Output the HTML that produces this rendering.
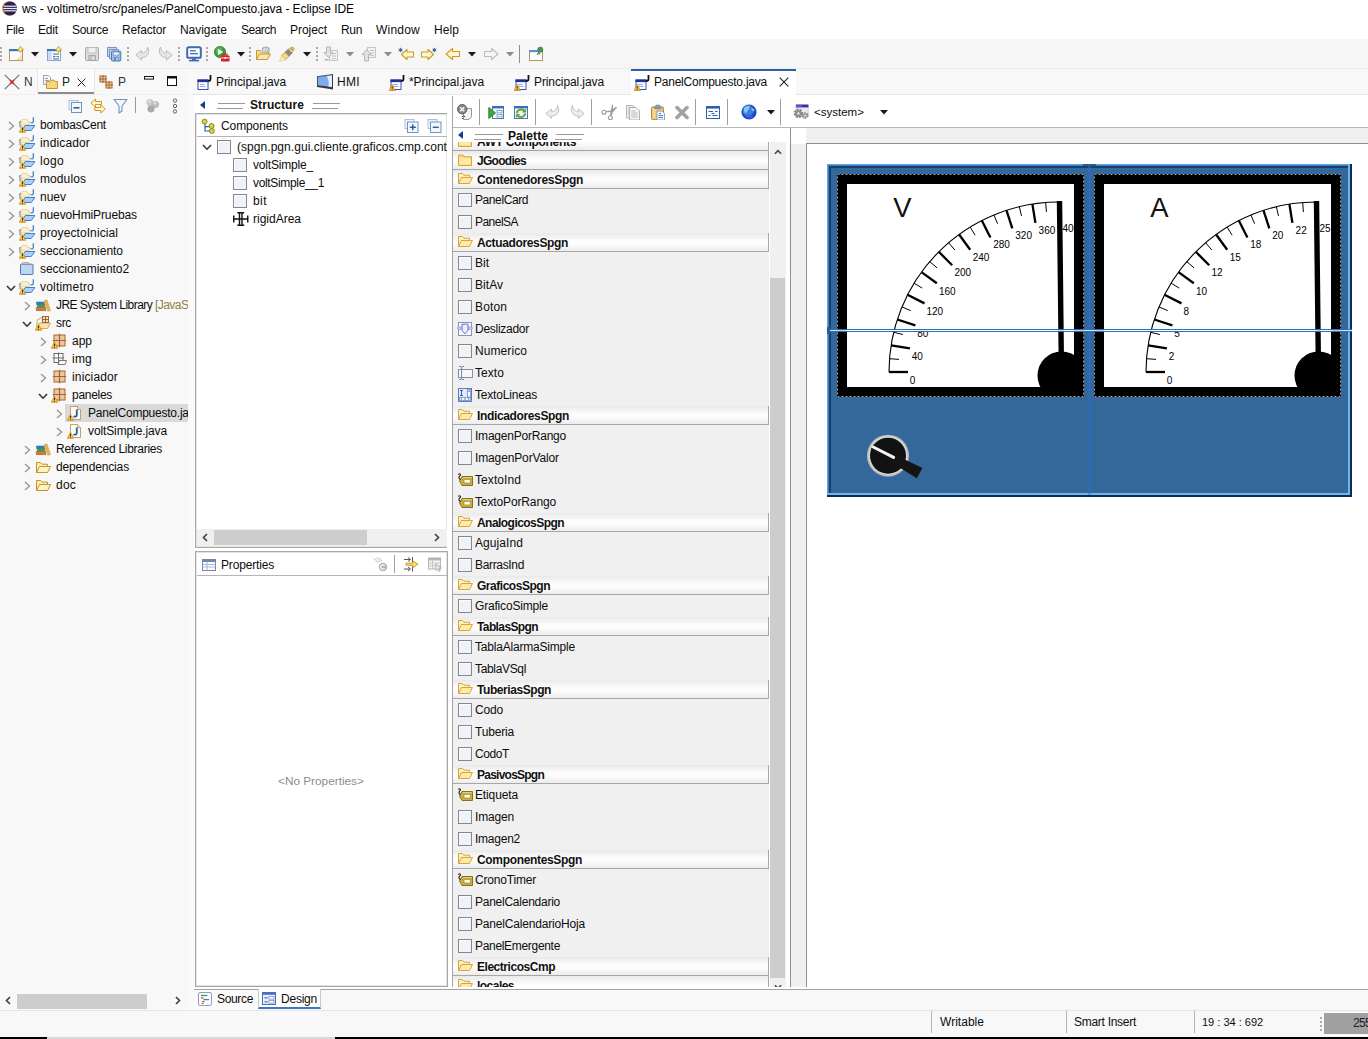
<!DOCTYPE html>
    <html><head><meta charset="utf-8"><title>ws - voltimetro/src/paneles/PanelCompuesto.java - Eclipse IDE</title>
    <style>
    html,body{margin:0;padding:0}
    body{width:1368px;height:1039px;overflow:hidden;position:relative;background:#f7f7f7;font-family:"Liberation Sans",sans-serif;font-size:12px;color:#0d0d0d}
    .t{position:absolute;white-space:pre;line-height:16px;height:16px}
    .i{position:absolute;overflow:visible}
    .b{position:absolute;box-sizing:border-box}
    .bold{font-weight:bold}
    .grey{color:#8a8a8a}
    .cat{position:absolute;left:453px;width:316px;height:19px;box-sizing:border-box;border-right:1px solid #a6a6a6;border-bottom:1px solid #a6a6a6;background:linear-gradient(#e9e9e9,#fdfdfd 45%,#fdfdfd 60%,#ececec)}
    .cat .t{left:24px;top:2px;font-weight:bold;color:#111}
    .cat .i{left:3px;top:1px}
    .pe{position:absolute;left:453px;width:316px;height:22px}
    .pe .t{left:22px;top:3px}
    .pe .i{left:4px;top:3px}
    .tr{position:absolute;left:0;height:18px;width:188px}
    </style></head><body>
    
<svg width="0" height="0" style="position:absolute"><defs><symbol id="eclipse" viewBox="0 0 15 15"><circle cx="7.3" cy="7.5" r="7.3" fill="#f09a3a"/><circle cx="8" cy="7.5" r="7" fill="#2c2255"/><rect x="1.6" y="4.6" width="13" height="1.2" fill="#ece8f4"/><rect x="1.1" y="6.9" width="14" height="1.2" fill="#ece8f4"/><rect x="1.6" y="9.2" width="13" height="1.2" fill="#ece8f4"/></symbol><symbol id="dd" viewBox="0 0 8 5"><path d="M0 0 H8 L4 4.5 Z" fill="#1a1a1a"/></symbol><symbol id="ddg" viewBox="0 0 8 5"><path d="M0 0 H8 L4 4.5 Z" fill="#8c8c8c"/></symbol><symbol id="tb_new" viewBox="0 0 16 16"><rect x="1.5" y="3.5" width="13" height="11" fill="#fdfdfd" stroke="#b59a5a"/><rect x="1" y="3" width="14" height="2.2" fill="#3f74b8"/><path d="M8 14 L14 8 V14Z" fill="#f3e3b8"/><path d="M12.5 0.3 L13.6 2.4 L15.7 3.5 L13.6 4.6 L12.5 6.7 L11.4 4.6 L9.3 3.5 L11.4 2.4 Z" fill="#fce98a" stroke="#c99a1a" stroke-width=".8" stroke-linejoin="round"/></symbol><symbol id="tb_newj" viewBox="0 0 16 16"><rect x="1.5" y="3.5" width="13" height="11" fill="#fdfdfd" stroke="#8aa4c8"/><rect x="1" y="3" width="14" height="2.2" fill="#3f74b8"/><rect x="2" y="5.2" width="3.6" height="9" fill="#c9dcf2"/><rect x="7" y="7.5" width="6" height="1.2" fill="#5c7fb0"/><rect x="7" y="10" width="2.5" height="1.2" fill="#5c7fb0"/><rect x="10.5" y="10" width="2.5" height="1.2" fill="#5c7fb0"/><rect x="7" y="12.3" width="6" height="1.2" fill="#5c7fb0"/><path d="M12.5 0.3 L13.6 2.4 L15.7 3.5 L13.6 4.6 L12.5 6.7 L11.4 4.6 L9.3 3.5 L11.4 2.4 Z" fill="#fce98a" stroke="#c99a1a" stroke-width=".8" stroke-linejoin="round"/></symbol><symbol id="tb_save" viewBox="0 0 16 16"><path d="M1.5 2.5 a1 1 0 0 1 1-1 H13.5 a1 1 0 0 1 1 1 V13.5 a1 1 0 0 1 -1 1 H2.5 a1 1 0 0 1 -1-1Z" fill="#dcdcdc" stroke="#a8a8a8"/><rect x="4" y="1.5" width="8" height="5.5" fill="#efefef" stroke="#b8b8b8" stroke-width=".8"/><rect x="5" y="9.5" width="6.5" height="5" fill="#c4c4c4" stroke="#a0a0a0" stroke-width=".8"/><rect x="8.5" y="10.8" width="1.6" height="2.8" fill="#efefef"/></symbol><symbol id="tb_saveall" viewBox="0 0 16 16"><path d="M1.5 1.5 H10.5 V10.5 H1.5Z" fill="#c5d8ee" stroke="#6f93c4"/><path d="M3.5 3.5 H12.5 V12.5 H3.5Z" fill="#c5d8ee" stroke="#6f93c4"/><path d="M5.5 6 a.8 .8 0 0 1 .8-.8 H14 a.8 .8 0 0 1 .8 .8 V14.2 a.8 .8 0 0 1 -.8 .8 H6.3 a.8 .8 0 0 1 -.8-.8Z" fill="#9fbde4" stroke="#4f7ab8"/><rect x="7.3" y="6" width="5.6" height="3.2" fill="#e8f0fa" stroke="#6f93c4" stroke-width=".6"/><rect x="8" y="11.2" width="4.6" height="3.6" fill="#5f88c4"/><rect x="10.3" y="12" width="1.3" height="2.2" fill="#e8f0fa"/></symbol><symbol id="tb_undo" viewBox="0 0 16 16"><path d="M0.8 9 L6.5 4.5 V7 C9.5 7 12 5 12.5 1 C15.5 6 12.5 11.8 6.5 11.5 V14 Z" fill="#e6e6e6" stroke="#b4b4b4" stroke-width=".9" stroke-linejoin="round"/></symbol><symbol id="tb_redo" viewBox="0 0 16 16"><path d="M15.2 9 L9.5 4.5 V7 C6.5 7 4 5 3.5 1 C0.5 6 3.5 11.8 9.5 11.5 V14 Z" fill="#e6e6e6" stroke="#b4b4b4" stroke-width=".9" stroke-linejoin="round"/></symbol><symbol id="tb_console" viewBox="0 0 16 16"><rect x="1.2" y="1.2" width="13.6" height="10.6" rx="1.6" fill="#fff" stroke="#3d6ab0" stroke-width="2"/><rect x="4" y="4.2" width="6" height="1.3" fill="#3d6ab0"/><rect x="4" y="7" width="8" height="1.3" fill="#3d6ab0"/><rect x="6" y="12.5" width="4" height="1.5" fill="#3d6ab0"/><rect x="3" y="13.8" width="10" height="1.6" fill="#3d6ab0"/></symbol><symbol id="tb_run" viewBox="0 0 16 16"><circle cx="6" cy="6" r="5.6" fill="#3f9b3f" stroke="#2a7a2a" stroke-width=".8"/><circle cx="5" cy="4.6" r="3.4" fill="#6fc26f" opacity=".6"/><path d="M4 3 L9.2 6 L4 9Z" fill="#fff"/><rect x="7" y="9.5" width="8.6" height="6" rx="1" fill="#d8202a"/><rect x="9.6" y="8" width="3.4" height="2" fill="none" stroke="#d8202a" stroke-width="1.1"/><rect x="7" y="11.4" width="8.6" height="1" fill="#fff" opacity=".85"/><rect x="10.3" y="11" width="2" height="1.8" fill="#fff"/></symbol><symbol id="tb_open" viewBox="0 0 16 16"><path d="M7.5 4.5 V1.8 H9 L9.6 1 H12.4 L13 1.8 H14 V6" fill="#c9d6ec" stroke="#7f96bc" stroke-width=".8"/><path d="M1.5 13.5 V4.5 H5.5 L6.8 6 H13.5 V8" fill="#f6dc9c" stroke="#c08c2c" stroke-width=".9" stroke-linejoin="round"/><path d="M1.5 13.5 L4.5 8 H15.5 L12.5 13.5Z" fill="#f9e5ae" stroke="#c08c2c" stroke-width=".9" stroke-linejoin="round"/></symbol><symbol id="tb_pen" viewBox="0 0 16 16"><path d="M9 3.5 L13.5 0.8 L15.3 2.6 L12.8 7.2 Z" fill="#f6d88a" stroke="#c08c2c" stroke-width=".8" stroke-linejoin="round"/><circle cx="12.8" cy="3.3" r=".8" fill="#555"/><path d="M6 6.2 L9 3.5 L12.8 7.2 L10 10.2Z" fill="#8a8a8a" stroke="#666" stroke-width=".6"/><path d="M2.5 10 L6 6.2 L10 10.2 L6.4 13.8Z" fill="#f6d88a" stroke="#c08c2c" stroke-width=".8"/><path d="M0.5 15.5 L2.5 10 L6.4 13.8Z" fill="#fdf3c8" stroke="#e4c060" stroke-width=".6"/></symbol><symbol id="tb_next" viewBox="0 0 16 16"><rect x="6.5" y="4.5" width="8" height="10" fill="#f2f2f2" stroke="#c4c4c4"/><rect x="9" y="7" width="4" height="1" fill="#c4c4c4"/><rect x="9" y="9.5" width="4" height="1" fill="#c4c4c4"/><rect x="9" y="12" width="4" height="1" fill="#c4c4c4"/><path d="M3.5 1 H7.5 V6.5 H10 L5.5 11.5 L1 6.5 H3.5Z" fill="#e2e2e2" stroke="#b0b0b0" stroke-width=".9" stroke-linejoin="round"/><rect x="1.5" y="13" width="4" height="1.4" fill="#b0b0b0"/></symbol><symbol id="tb_prev" viewBox="0 0 16 16"><rect x="6.5" y="1.5" width="8" height="10" fill="#f2f2f2" stroke="#c4c4c4"/><rect x="9" y="4" width="4" height="1" fill="#c4c4c4"/><rect x="9" y="6.5" width="4" height="1" fill="#c4c4c4"/><rect x="9" y="9" width="4" height="1" fill="#c4c4c4"/><path d="M3.5 15 H7.5 V8.5 H10 L5.5 3.5 L1 8.5 H3.5Z" fill="#e2e2e2" stroke="#b0b0b0" stroke-width=".9" stroke-linejoin="round"/></symbol><symbol id="tb_lastedit" viewBox="0 0 16 16"><path d="M3.5 8.5 L9 3.5 V6 H15.5 V11 H9 V13.5Z" fill="#fff7d4" stroke="#d09a1e" stroke-width="1.1" stroke-linejoin="round"/><g transform="translate(2.6 4)"><path d="M0 -2.2V2.2M-1.9 -1.1L1.9 1.1M-1.9 1.1L1.9 -1.1" stroke="#2f5f9a" stroke-width="1" fill="none"/></g></symbol><symbol id="tb_nextedit" viewBox="0 0 16 16"><path d="M12.5 8.5 L7 3.5 V6 H0.5 V11 H7 V13.5Z" fill="#fff7d4" stroke="#d09a1e" stroke-width="1.1" stroke-linejoin="round"/><g transform="translate(13.4 4)"><path d="M0 -2.2V2.2M-1.9 -1.1L1.9 1.1M-1.9 1.1L1.9 -1.1" stroke="#2f5f9a" stroke-width="1" fill="none"/></g></symbol><symbol id="tb_back" viewBox="0 0 16 16"><path d="M1 8 L7.5 2.5 V5.5 H14.5 V10.5 H7.5 V13.5Z" fill="#fff7d4" stroke="#d09a1e" stroke-width="1.1" stroke-linejoin="round"/></symbol><symbol id="tb_fwd" viewBox="0 0 16 16"><path d="M15 8 L8.5 2.5 V5.5 H1.5 V10.5 H8.5 V13.5Z" fill="#f4f4f4" stroke="#bdbdbd" stroke-width="1.1" stroke-linejoin="round"/></symbol><symbol id="tb_pin" viewBox="0 0 16 16"><rect x="1.5" y="4.5" width="13" height="10" fill="#fbfdff" stroke="#b59a5a"/><rect x="1" y="4" width="14" height="2.2" fill="#5f8fcc"/><path d="M9 9 L11 6.5" stroke="#555" stroke-width="1"/><circle cx="12.3" cy="3.6" r="2.6" fill="#3f9b4f" stroke="#2a7a3a" stroke-width=".6"/><path d="M10 6.8 L12 8" stroke="#2a7a3a" stroke-width="1.4"/></symbol><symbol id="x_red" viewBox="0 0 16 16"><path d="M0.8 0.8 L15.2 15.2 M15.2 0.8 L0.8 15.2" stroke="#6e6e6e" stroke-width="1.2"/><path d="M6 6 L10 10 M10 6 L6 10" stroke="#d42020" stroke-width="1.5"/></symbol><symbol id="x_close" viewBox="0 0 10 10"><path d="M0.7 0.7 L9.3 9.3 M9.3 0.7 L0.7 9.3" stroke="#222" stroke-width="1.1"/></symbol><symbol id="pkgexp" viewBox="0 0 16 16"><path d="M1.5 1.5 H6.5 L8.5 3.5 V10.5 H1.5Z" fill="#f4f7fb" stroke="#8a99ad" stroke-width=".9"/><rect x="3" y="4" width="3" height=".9" fill="#7c9cc8"/><rect x="3" y="6" width="4" height=".9" fill="#7c9cc8"/><path d="M4.5 14.5 V7.5 H8 L9 6.2 H12.5 L13.3 7.5 H15.5 V14.5Z" fill="#f7d67a" stroke="#c08c2c" stroke-width=".9" stroke-linejoin="round"/></symbol><symbol id="hier" viewBox="0 0 16 16"><rect x="2" y="2" width="6" height="6" fill="#e9c9a4" stroke="#a8642c" stroke-width="1"/><path d="M5.0 1 V9 M1 5.0 H9" stroke="#a8642c" stroke-width="1"/><rect x="8" y="8" width="6" height="6" fill="#e9c9a4" stroke="#a8642c" stroke-width="1"/><path d="M11.0 7 V15 M7 11.0 H15" stroke="#a8642c" stroke-width="1"/></symbol><symbol id="minim" viewBox="0 0 10 4"><rect x="0.5" y="0.5" width="9" height="2.6" fill="#fff" stroke="#111" stroke-width="1"/></symbol><symbol id="maxim" viewBox="0 0 10 10"><rect x="0.5" y="0.5" width="9" height="9" fill="#fff" stroke="#111" stroke-width="1"/><rect x="0.5" y="0.5" width="9" height="2" fill="#111"/></symbol><symbol id="collapse" viewBox="0 0 16 16"><rect x="1" y="2.5" width="9" height="9" fill="#eef4fb" stroke="#a9c1de"/><rect x="3.5" y="4.5" width="10" height="10" fill="#f4f8fd" stroke="#6f93c4"/><rect x="5.5" y="9" width="6" height="1.6" fill="#2f5f9a"/></symbol><symbol id="link" viewBox="0 0 16 16"><path d="M1 5 L5.5 1 V3.5 H11.5 V6.5 H5.5 V9Z" fill="#fff7d4" stroke="#d09a1e" stroke-linejoin="round"/><path d="M15.3 11 L10.8 7 V9.5 H4.8 V12.5 H10.8 V15Z" fill="#fff7d4" stroke="#d09a1e" stroke-linejoin="round"/></symbol><symbol id="filter" viewBox="0 0 16 16"><path d="M1 1.5 H14 L9 8 V13 L6 15 V8Z" fill="#f1f6fc" stroke="#6f93c4" stroke-width="1.1" stroke-linejoin="round"/></symbol><symbol id="focus" viewBox="0 0 16 16"><circle cx="5" cy="4.5" r="3.6" fill="#c9c9c9"/><circle cx="10.5" cy="6.5" r="3.6" fill="#bdbdbd"/><circle cx="6" cy="10.8" r="3.6" fill="#a9a9a9"/><circle cx="4.4" cy="3.6" r="1.4" fill="#e2e2e2"/><circle cx="10" cy="5.4" r="1.4" fill="#dcdcdc"/></symbol><symbol id="kebab" viewBox="0 0 8 16"><circle cx="4" cy="2.6" r="1.7" fill="none" stroke="#555" stroke-width=".9"/><circle cx="4" cy="8" r="1.7" fill="none" stroke="#555" stroke-width=".9"/><circle cx="4" cy="13.4" r="1.7" fill="none" stroke="#555" stroke-width=".9"/></symbol><symbol id="arr_c" viewBox="0 0 7 10"><path d="M1 1 L5.5 5 L1 9" fill="none" stroke="#9a9a9a" stroke-width="1.5"/></symbol><symbol id="arr_o" viewBox="0 0 10 7"><path d="M1 1 L5 5.2 L9 1" fill="none" stroke="#333" stroke-width="1.6"/></symbol><symbol id="proj" viewBox="0 0 16 16"><path d="M1.2 10.5 L0.8 4.6 H2.2" fill="none" stroke="#5a5a5a" stroke-width=".9"/><path d="M2 9 V4.5 L3.2 2.4 H8.2 L9.2 4.5 H10.5 V7.5 H3.5Z" fill="#fbeec4" stroke="#e0c884" stroke-width=".7" stroke-linejoin="round"/><path d="M6.2 8.5 H16 L12.2 13.5 H2.8Z" fill="#a9d0f7" stroke="#3f7fd0" stroke-width="1" stroke-linejoin="round"/><path d="M14.3 0.3 V4.6 C14.3 6.2 12.6 6.4 11.6 5.4" fill="none" stroke="#3a70c0" stroke-width="1.2"/><path d="M3.5 9.2 L0.3 15.3 H6.7 Z" fill="#f5c24a" stroke="#c98a1c" stroke-width=".8" stroke-linejoin="round"/><rect x="3" y="11" width="1" height="2.2" fill="#4a3200"/><rect x="3" y="13.8" width="1" height="1" fill="#4a3200"/></symbol><symbol id="projclosed" viewBox="0 0 16 16"><path d="M2.5 3.2 L3.7 1.5 H9.5 L10.5 3.2" fill="#f3e7c4" stroke="#c9a050" stroke-width=".8"/><rect x="1.5" y="3.2" width="12.5" height="10.3" rx=".8" fill="#bcd6f2" stroke="#4a7ab8" stroke-width="1"/></symbol><symbol id="jre" viewBox="0 0 16 16"><rect x="1.6" y="5" width="7.6" height="2.6" fill="#2f7fb4" stroke="#2a6a9a" stroke-width=".5"/><rect x="2.3" y="7.6" width="7.6" height="2.6" fill="#3f9a6c" stroke="#2f7f55" stroke-width=".5"/><rect x="1.2" y="10.2" width="9.6" height="3.6" fill="#c87a3c" stroke="#a85f28" stroke-width=".5"/><path d="M9.3 3.6 L11.8 2.8 L15.4 13.4 L12.8 14.2Z" fill="#eeb04a" stroke="#d09430" stroke-width=".6" stroke-linejoin="round"/></symbol><symbol id="srcf" viewBox="0 0 16 16"><path d="M1.5 11.5 L2.5 4.5 H4 L5 3 H7.5" fill="none" stroke="#c9a050" stroke-width=".9"/><path d="M4.5 8 H15.5 L12.5 13.5 H1.5Z" fill="#f9e3a8" stroke="#c9a050" stroke-width=".9" stroke-linejoin="round"/><rect x="7.5" y="1.5" width="6" height="6" fill="#f3dcc0" stroke="#9a5a2a" stroke-width=".9"/><path d="M10.5 1 V8 M7 4.5 H14" stroke="#9a5a2a" stroke-width=".9"/><path d="M3.5 9.2 L0.3 15.3 H6.7 Z" fill="#f5c24a" stroke="#c98a1c" stroke-width=".8" stroke-linejoin="round"/><rect x="3" y="11" width="1" height="2.2" fill="#4a3200"/><rect x="3" y="13.8" width="1" height="1" fill="#4a3200"/></symbol><symbol id="pkg" viewBox="0 0 16 16"><rect x="3" y="2" width="11" height="11" fill="#e9c9a4" stroke="#a8642c" stroke-width="1"/><path d="M8.5 0.8 V14.2 M1.8 7.5 H15.2" stroke="#a8642c" stroke-width="1.2"/></symbol><symbol id="pkgw" viewBox="0 0 16 16"><rect x="3" y="2" width="11" height="11" fill="#e9c9a4" stroke="#a8642c" stroke-width="1"/><path d="M8.5 0.8 V14.2 M1.8 7.5 H15.2" stroke="#a8642c" stroke-width="1.2"/><path d="M3.5 9.2 L0.3 15.3 H6.7 Z" fill="#f5c24a" stroke="#c98a1c" stroke-width=".8" stroke-linejoin="round"/><rect x="3" y="11" width="1" height="2.2" fill="#4a3200"/><rect x="3" y="13.8" width="1" height="1" fill="#4a3200"/></symbol><symbol id="pkge" viewBox="0 0 16 16"><rect x="3" y="2.5" width="9" height="9" fill="#fdfdfd" stroke="#6a6a6a" stroke-width="1"/><path d="M7.5 1.5 V12.5 M1.8 7 H13.2" stroke="#6a6a6a" stroke-width="1"/><path d="M7 13.5 L8.5 9.5 H15.5 L14 13.5Z" fill="#fdfdfd" stroke="#6a6a6a" stroke-width=".9"/></symbol><symbol id="jfilew" viewBox="0 0 16 16"><path d="M3.5 1.5 H10.5 L13.5 4.5 V14.5 H3.5Z" fill="#fffdf4" stroke="#b89a5a" stroke-width=".9"/><path d="M10.5 1.5 V4.5 H13.5" fill="#f2e4bc" stroke="#b89a5a" stroke-width=".8"/><path d="M9.8 4.5 V9.8 C9.8 11.8 7.6 12.2 6.6 11" fill="none" stroke="#2f62ad" stroke-width="1.9"/><path d="M3.5 9.2 L0.3 15.3 H6.7 Z" fill="#f5c24a" stroke="#c98a1c" stroke-width=".8" stroke-linejoin="round"/><rect x="3" y="11" width="1" height="2.2" fill="#4a3200"/><rect x="3" y="13.8" width="1" height="1" fill="#4a3200"/></symbol><symbol id="folder" viewBox="0 0 16 16"><path d="M1.5 13.5 V3.5 H5.5 L7 5.2 H12.5 V7.5" fill="#fbeec4" stroke="#c9921a" stroke-width="1" stroke-linejoin="round"/><path d="M1.5 13.5 L4.5 7.5 H15.5 L12.5 13.5Z" fill="#fdf2cc" stroke="#c9921a" stroke-width="1" stroke-linejoin="round"/></symbol><symbol id="sc_l" viewBox="0 0 6 9"><path d="M5 1 L1.5 4.5 L5 8" fill="none" stroke="#444" stroke-width="1.7"/></symbol><symbol id="sc_r" viewBox="0 0 6 9"><path d="M1 1 L4.5 4.5 L1 8" fill="none" stroke="#444" stroke-width="1.7"/></symbol><symbol id="sc_u" viewBox="0 0 9 6"><path d="M1 5 L4.5 1.5 L8 5" fill="none" stroke="#444" stroke-width="1.7"/></symbol><symbol id="sc_d" viewBox="0 0 9 6"><path d="M1 1 L4.5 4.5 L8 1" fill="none" stroke="#444" stroke-width="1.7"/></symbol><symbol id="jtab" viewBox="0 0 16 16"><rect x="2" y="5" width="10" height="9.5" fill="#fdfdff" stroke="#3a4fb0" stroke-width="1"/><rect x="1.5" y="4.5" width="11" height="2.6" fill="#1f2f9a"/><rect x="4" y="9" width="4.5" height="1" fill="#9aa8d8"/><rect x="4" y="11" width="5.5" height="1" fill="#9aa8d8"/><path d="M14.5 0 V4 C14.5 5.7 13.4 6 12 5.9" fill="none" stroke="#111" stroke-width="1.8"/></symbol><symbol id="jtabw" viewBox="0 0 16 16"><rect x="2" y="5" width="10" height="9.5" fill="#fdfdff" stroke="#3a4fb0" stroke-width="1"/><rect x="1.5" y="4.5" width="11" height="2.6" fill="#1f2f9a"/><rect x="4" y="9" width="4.5" height="1" fill="#9aa8d8"/><rect x="4" y="11" width="5.5" height="1" fill="#9aa8d8"/><path d="M14.5 0 V4 C14.5 5.7 13.4 6 12 5.9" fill="none" stroke="#111" stroke-width="1.8"/><g transform="translate(-0.3 0.4)"><path d="M3.5 9.2 L0.3 15.3 H6.7 Z" fill="#f5c24a" stroke="#c98a1c" stroke-width=".8" stroke-linejoin="round"/><rect x="3" y="11" width="1" height="2.2" fill="#4a3200"/><rect x="3" y="13.8" width="1" height="1" fill="#4a3200"/></g></symbol><symbol id="hmi" viewBox="0 0 16 16"><path d="M0 2.3 L16 0.1 V15.5 L0 12.9Z" fill="#3c3c3c"/><path d="M0.8 3 L15 1.1 V13 L0.8 11.2Z" fill="#7eabf2"/><path d="M9.6 1.9 L15 1.1 V13 L11.4 12.5 C12.4 9 11.4 5 9.6 1.9Z" fill="#f4f8ff" opacity=".85"/><path d="M0.8 3 L15 1.1" stroke="#5a78a8" stroke-width=".6"/></symbol><symbol id="tri_l" viewBox="0 0 5 8"><path d="M5 0 V8 L0 4Z" fill="#123f8a"/></symbol><symbol id="comps" viewBox="0 0 16 16"><path d="M4 6 V13 H8.4 M4 8.6 H8.4" fill="none" stroke="#2f5fa0" stroke-width="1.2"/><circle cx="3.6" cy="3.6" r="2.5" fill="#d2d040" stroke="#86841c" stroke-width=".9"/><circle cx="10.6" cy="8" r="2.5" fill="#d2d040" stroke="#86841c" stroke-width=".9"/><circle cx="10.8" cy="13" r="2.5" fill="#d2d040" stroke="#86841c" stroke-width=".9"/></symbol><symbol id="expall" viewBox="0 0 16 16"><rect x="1" y="1.5" width="9" height="9" fill="#eef4fb" stroke="#a9c1de"/><rect x="3.5" y="4" width="10.5" height="10.5" fill="#f4f8fd" stroke="#6f93c4"/><path d="M5.8 9.3 H11.8 M8.8 6.3 V12.3" stroke="#2f5f9a" stroke-width="1.5"/></symbol><symbol id="colall" viewBox="0 0 16 16"><rect x="1" y="1.5" width="9" height="9" fill="#eef4fb" stroke="#a9c1de"/><rect x="3.5" y="4" width="10.5" height="10.5" fill="#f4f8fd" stroke="#6f93c4"/><path d="M5.8 9.3 H11.8" stroke="#2f5f9a" stroke-width="1.5"/></symbol><symbol id="chk" viewBox="0 0 14 14"><rect x="0.5" y="0.5" width="13" height="13" fill="#eef3fa" stroke="#86868f" stroke-width="1"/><path d="M1.5 12.5 V1.5 H12.5" fill="none" stroke="#fafcff" stroke-width="1"/></symbol><symbol id="rigid" viewBox="0 0 16 14"><path d="M0 7 H15.5 M0.75 3.5 V10.5 M14.75 3.5 V10.5 M6.5 0.5 V13.5 M9 0.5 V13.5 M4.3 0.75 H11.2 M4.3 13.25 H11.2" fill="none" stroke="#111" stroke-width="1.4"/></symbol><symbol id="props" viewBox="0 0 16 16"><rect x="1.5" y="2.5" width="13" height="11" fill="#fff" stroke="#6f86ad" stroke-width="1"/><rect x="1.5" y="2.5" width="13" height="2.5" fill="#6f86ad"/><path d="M1.5 7.5 H14.5 M1.5 10 H14.5 M6 5 V13.5" stroke="#9fb2d2" stroke-width=".9"/></symbol><symbol id="pr1" viewBox="0 0 16 16"><path d="M2 2 L6 7 M4.5 1.5 L8 6 M7 1.5 L9.5 5" stroke="#bdbdbd" stroke-width="1"/><circle cx="11" cy="11" r="4.2" fill="#b4b4b4"/><path d="M12.6 9.6 A2.2 2.2 0 1 0 12.6 12.4" fill="none" stroke="#fff" stroke-width="1.2"/></symbol><symbol id="pr2" viewBox="0 0 16 16"><path d="M1 3.5 H7 M5 1.5 L7.5 3.5 L5 5.5 M1 13 H7 M5 11 L7.5 13 L5 15 M9.5 1 V6 M9.5 10.5 V15.5" fill="none" stroke="#555" stroke-width="1"/><path d="M3 7.2 H10 V5 L15 8.2 L10 11.4 V9.2 H3Z" fill="#fbe27a" stroke="#c9921a" stroke-width=".9" stroke-linejoin="round"/></symbol><symbol id="pr3" viewBox="0 0 16 16"><rect x="1.5" y="2" width="12" height="11" fill="#f4f4f4" stroke="#b4b4b4"/><rect x="1.5" y="2" width="12" height="2.4" fill="#b4b4b4"/><path d="M1.5 7 H13.5 M1.5 9.8 H13.5 M5.5 4.4 V13" stroke="#c4c4c4" stroke-width=".9"/><path d="M8.5 8 L14.5 12 L11.8 12.4 L13.2 15 L12 15.5 L10.7 12.9 L8.8 14.5Z" fill="#e8e8e8" stroke="#a8a8a8" stroke-width=".8"/></symbol><symbol id="dt_test" viewBox="0 0 16 16"><path d="M6.5 4.5 H14.5 V12.5 L12 15.5 H6.5Z" fill="#f4f4f4" stroke="#8a8a8a" stroke-width=".9"/><circle cx="5.2" cy="5.2" r="4.7" fill="#8a8a8a" stroke="#444" stroke-width=".8"/><path d="M3.2 3.2 L7.2 7.2 M7.2 3.2 L3.2 7.2" stroke="#f4f4f4" stroke-width="1.6"/><path d="M5 12.5 H9 M5 14.5 H7" stroke="#444" stroke-width="1" stroke-dasharray="1.2 .8"/></symbol><symbol id="dt_run" viewBox="0 0 16 16"><rect x="4.5" y="2.5" width="11" height="12" fill="#f4f8fd" stroke="#4a7ab8" stroke-width="1"/><rect x="4" y="2" width="12" height="2.4" fill="#3a6fb5"/><rect x="9" y="6.5" width="5" height="2.4" fill="#fff" stroke="#6f93c4" stroke-width=".8"/><rect x="9" y="10.5" width="5" height="2.4" fill="#fff" stroke="#6f93c4" stroke-width=".8"/><path d="M0.8 3.5 L7.5 9 L0.8 14.5Z" fill="#3fa83f" stroke="#1f7a1f" stroke-width=".9" stroke-linejoin="round"/></symbol><symbol id="dt_refresh" viewBox="0 0 16 16"><rect x="1.5" y="2.5" width="13" height="12" fill="#f4f8fd" stroke="#4a7ab8" stroke-width="1"/><rect x="1" y="2" width="14" height="2.4" fill="#3a6fb5"/><path d="M4.5 9 A3.6 3.2 0 0 1 10.5 7 L9.5 8.2 H12.8 V5 L11.7 6 A5 4.4 0 0 0 3.2 9Z" fill="#5fae2a" stroke="#3a7a1a" stroke-width=".4"/><path d="M11.5 9.5 A3.6 3.2 0 0 1 5.5 11.5 L6.5 10.3 H3.2 V13.5 L4.3 12.5 A5 4.4 0 0 0 12.8 9.5Z" fill="#5fae2a" stroke="#3a7a1a" stroke-width=".4"/></symbol><symbol id="dt_undo" viewBox="0 0 16 16"><path d="M0.8 9.5 L6.5 5 V7.5 C9.5 7.5 12 5.5 12.5 1.5 C15.5 6.5 12.5 12.3 6.5 12 V14.5 Z" fill="#ececec" stroke="#bcbcbc" stroke-width=".9" stroke-linejoin="round"/></symbol><symbol id="dt_redo" viewBox="0 0 16 16"><path d="M15.2 9.5 L9.5 5 V7.5 C6.5 7.5 4 5.5 3.5 1.5 C0.5 6.5 3.5 12.3 9.5 12 V14.5 Z" fill="#ececec" stroke="#bcbcbc" stroke-width=".9" stroke-linejoin="round"/></symbol><symbol id="dt_cut" viewBox="0 0 16 16"><path d="M4.6 7.6 L10 7.2 L15.2 3.6 L11 8.4 L10.2 11.8" fill="none" stroke="#9c9c9c" stroke-width="1.4" stroke-linejoin="round"/><path d="M9.6 11.6 L10 7 L11.6 0.8 L11.2 7.4" fill="#a4a4a4" stroke="#9c9c9c" stroke-width=".9" stroke-linejoin="round"/><circle cx="3" cy="8.3" r="2" fill="#fdfdfd" stroke="#9c9c9c" stroke-width="1.1"/><circle cx="9.4" cy="13.7" r="2" fill="#fdfdfd" stroke="#9c9c9c" stroke-width="1.1"/></symbol><symbol id="dt_copy" viewBox="0 0 16 16"><path d="M1.5 1.5 H8 L10.5 4 V14 H1.5Z" fill="#ececec" stroke="#b0b0b0" stroke-width=".9"/><path d="M3 4 H5 M3 6 H5 M3 8 H5 M3 10 H5" stroke="#bcbcbc" stroke-width=".8"/><path d="M4.5 3.5 H11 L14.5 7 V16 H4.5Z" fill="#f4f4f4" stroke="#a8a8a8" stroke-width=".9"/><path d="M6.3 7 H10.5 M6.3 9 H12.7 M6.3 11 H12.7 M6.3 13 H12.7" stroke="#b4b4b4" stroke-width=".9"/></symbol><symbol id="dt_paste" viewBox="0 0 16 16"><rect x="1.5" y="3" width="12" height="12.6" rx="1.2" fill="#efc46a" stroke="#b07a3a" stroke-width=".9"/><rect x="2.6" y="4.2" width="3" height="10.4" fill="#f8dc9a" opacity=".8"/><path d="M4.5 4.5 V3.2 L6 1.2 H9.6 L11 3.2 V4.5Z" fill="#8a9ab4" stroke="#6a7a98" stroke-width=".7"/><path d="M7 7 H12 L14.5 9.5 V16 H7Z" fill="#f0f8ff" stroke="#8a9ab0" stroke-width=".9"/><path d="M9 9.6 H11 M8.6 11.6 H13 M8.6 13.6 H13" stroke="#3f7fc0" stroke-width="1"/></symbol><symbol id="dt_del" viewBox="0 0 16 16"><path d="M3 3.6 L13 13.6 M13 3.6 L3 13.6" stroke="#a2a2a2" stroke-width="3.6" stroke-linecap="round"/></symbol><symbol id="dt_layout" viewBox="0 0 16 16"><rect x="1.5" y="2.5" width="13" height="12" fill="#f8fbff" stroke="#2f5fa8" stroke-width="1"/><rect x="1" y="2" width="14" height="2.6" fill="#2f5fa8"/><path d="M3.5 7.5 H8 M10 7.5 H12.5 M3.5 11.5 H5.5 M7.5 11.5 H12.5 M6.5 9.5 H9.5" stroke="#2f5fa8" stroke-width="1.2"/></symbol><symbol id="dt_globe" viewBox="0 0 16 16"><circle cx="8" cy="8" r="7.6" fill="#2446c4"/><circle cx="7" cy="6.6" r="5.6" fill="#3f7ee4" opacity=".9"/><path d="M3 4.5 C4.5 2 7.5 1.5 9 2.6 C8 4.2 8.6 5.6 7 6.4 C5.8 7 6 9 4.6 9.4 C3.4 8.6 2.4 6.4 3 4.5Z" fill="#7fd4f4" opacity=".9"/><path d="M10.5 4.4 C12 4 13.6 5.4 13.4 7 C12.6 7.6 11.6 7 11 6 C10.6 5.4 10.2 5 10.5 4.4Z" fill="#8fdcf8" opacity=".85"/><ellipse cx="8" cy="12.6" rx="4" ry="1.6" fill="#3a64dc" opacity=".7"/></symbol><symbol id="dt_sys" viewBox="0 0 16 16"><rect x="3" y="0.8" width="12.2" height="11.6" fill="#e9e9ef" stroke="#c4c4d0" stroke-width=".8"/><rect x="3" y="0.6" width="12.4" height="2.8" fill="#3a2fa8"/><rect x="3" y="0.6" width="6" height="2.8" fill="#7a72d0" opacity=".6"/><circle cx="5.4" cy="9.4" r="3.4" fill="none" stroke="#7e7e7e" stroke-width="2.6" stroke-dasharray="1.9 .9"/><circle cx="5.4" cy="9.4" r="3" fill="#8c8c8c"/><circle cx="5.4" cy="9.4" r="1.2" fill="#f4f4f4"/><circle cx="12" cy="11.6" r="2.4" fill="none" stroke="#8a8a8a" stroke-width="2" stroke-dasharray="1.5 .8"/><circle cx="12" cy="11.6" r="2.2" fill="#9a9a9a"/><circle cx="12" cy="11.6" r=".9" fill="#f4f4f4"/></symbol><symbol id="fold_c" viewBox="0 0 16 16"><path d="M1.5 13.5 V3 H6 L7.5 4.8 H14.5 V13.5Z" fill="#fbd97a" stroke="#d9a43a" stroke-width="1" stroke-linejoin="round"/><path d="M2.5 6 H13.5 V12.5 H2.5Z" fill="#fde9a8"/></symbol><symbol id="fold_o" viewBox="0 0 16 16"><path d="M1.5 12.5 V2.5 H5.5 L7 4.2 H12.5 V6.5" fill="#fbeec4" stroke="#d9a43a" stroke-width="1" stroke-linejoin="round"/><path d="M1.5 12.5 L4.5 6.5 H15.5 L12.5 12.5Z" fill="#fde9a8" stroke="#d9a43a" stroke-width="1" stroke-linejoin="round"/></symbol><symbol id="slider" viewBox="0 0 16 14"><rect x="1.5" y="0.5" width="13" height="13" fill="#f7f9ff" stroke="#8a90c4" stroke-width="1"/><rect x="0.5" y="5" width="15" height="2.4" rx="1.2" fill="#c4ccf0" stroke="#8a94d4" stroke-width=".7"/><path d="M5 2.2 H11 V7 C11 9 9.5 10.8 8 11.6 C6.5 10.8 5 9 5 7Z" fill="#eceffb" stroke="#6a70bc" stroke-width="1"/></symbol><symbol id="tfield" viewBox="0 0 16 14"><rect x="1.5" y="3.5" width="14" height="8" fill="#f4f8fd" stroke="#8c8c9c" stroke-width="1"/><path d="M2 0.5 H4.2 M5 0.5 H7.2 M2 13.5 H4.2 M5 13.5 H7.2 M4.6 1 V13" fill="none" stroke="#6a86b4" stroke-width="1"/></symbol><symbol id="tarea" viewBox="0 0 16 14"><rect x="1.5" y="0.5" width="13" height="13" fill="#e4ecfa" stroke="#5a7ec4" stroke-width="1"/><path d="M3 2.5 H6 M3 7.5 H6 M4.5 2.5 V7.5" stroke="#2f4f9a" stroke-width=".9" fill="none"/><rect x="10.5" y="1.5" width="3" height="7.5" fill="#fff" stroke="#5a7ec4" stroke-width=".7"/><rect x="11.3" y="2.6" width="1.4" height="1.4" fill="#5a7ec4"/><rect x="2.5" y="9.5" width="11" height="3" fill="#fff" stroke="#5a7ec4" stroke-width=".7"/><rect x="3.8" y="10.4" width="1.5" height="1.3" fill="#5a7ec4"/><rect x="7.3" y="10.4" width="1.5" height="1.3" fill="#5a7ec4"/><rect x="10.8" y="10.4" width="1.5" height="1.3" fill="#5a7ec4"/></symbol><symbol id="label" viewBox="0 0 16 14"><path d="M2.5 8 L5 3.5 H15.5 V12.5 H5Z" fill="#cbae42" stroke="#86701f" stroke-width="1" stroke-linejoin="round"/><path d="M6 4.6 H14.5" stroke="#e6d27a" stroke-width="1"/><rect x="7" y="6.3" width="6.5" height="3.7" fill="#fffbe4" stroke="#9a8430" stroke-width=".7"/><path d="M1.2 1.4 C2.8 0 4.4 1.6 2.8 2.9 C1.4 4 1.8 5.8 3.6 6.4" fill="none" stroke="#1a1a1a" stroke-width="1.1"/></symbol><symbol id="src_ic" viewBox="0 0 16 16"><rect x="1.5" y="1.5" width="13" height="13" rx="1.5" fill="#fff" stroke="#8e9cd0" stroke-width="1"/><path d="M4 4.5 H10.5" stroke="#3f9a4f" stroke-width="1.3"/><path d="M4 7 H6.5" stroke="#d0502c" stroke-width="1.3"/><path d="M6.5 8.6 H12" stroke="#3f7fc0" stroke-width="1.3"/><path d="M5 10.6 H7.5" stroke="#d0502c" stroke-width="1.3"/><path d="M4 12.5 H7" stroke="#d0a82c" stroke-width="1.3"/></symbol><symbol id="des_ic" viewBox="0 0 16 16"><rect x="1.5" y="2.5" width="13" height="12" fill="#e9f0fb" stroke="#4a6fb0" stroke-width="1"/><rect x="1" y="2" width="14" height="2.8" fill="#4a6fc0"/><rect x="3.5" y="7" width="3" height="1.6" fill="#6f86c8"/><rect x="8" y="6.5" width="5" height="2.6" fill="#fff" stroke="#6f86c8" stroke-width=".7"/><rect x="3.5" y="11" width="3" height="1.6" fill="#6f86c8"/><rect x="8" y="10.5" width="5" height="2.6" fill="#fff" stroke="#6f86c8" stroke-width=".7"/></symbol></defs></svg>
<div class="b" style="left:0;top:0;width:1368px;height:39px;background:#fff"></div>
<svg class="i" style="left:2px;top:1px" width="15" height="15" ><use href="#eclipse"/></svg>
<span class="t " style="left:22px;top:1px;color:#000;letter-spacing:-0.057px">ws - voltimetro/src/paneles/PanelCompuesto.java - Eclipse IDE</span>
<span class="t " style="left:6px;top:22px;letter-spacing:-0.336px;">File</span>
<span class="t " style="left:38px;top:22px;letter-spacing:-0.172px;">Edit</span>
<span class="t " style="left:72px;top:22px;letter-spacing:-0.339px;">Source</span>
<span class="t " style="left:122px;top:22px;letter-spacing:-0.17px;">Refactor</span>
<span class="t " style="left:180px;top:22px;letter-spacing:-0.047px;">Navigate</span>
<span class="t " style="left:241px;top:22px;letter-spacing:-0.505px;">Search</span>
<span class="t " style="left:290px;top:22px;letter-spacing:-0.051px;">Project</span>
<span class="t " style="left:341px;top:22px;letter-spacing:-0.339px;">Run</span>
<span class="t " style="left:376px;top:22px;letter-spacing:0.219px;">Window</span>
<span class="t " style="left:434px;top:22px;letter-spacing:0.078px;">Help</span>
<div class="b" style="left:0;top:39px;width:1368px;height:30px;background:#f6f6f6"></div>
<svg class="i" style="left:8px;top:46px" width="16" height="16" ><use href="#tb_new"/></svg>
<svg class="i" style="left:31px;top:52px" width="8" height="5" ><use href="#dd"/></svg>
<svg class="i" style="left:46px;top:46px" width="16" height="16" ><use href="#tb_newj"/></svg>
<svg class="i" style="left:69px;top:52px" width="8" height="5" ><use href="#dd"/></svg>
<svg class="i" style="left:84px;top:46px" width="16" height="16" ><use href="#tb_save"/></svg>
<svg class="i" style="left:106px;top:46px" width="16" height="16" ><use href="#tb_saveall"/></svg>
<svg class="i" style="left:135px;top:46px" width="16" height="16" ><use href="#tb_undo"/></svg>
<svg class="i" style="left:157px;top:46px" width="16" height="16" ><use href="#tb_redo"/></svg>
<svg class="i" style="left:186px;top:46px" width="16" height="16" ><use href="#tb_console"/></svg>
<svg class="i" style="left:214px;top:46px" width="16" height="16" ><use href="#tb_run"/></svg>
<svg class="i" style="left:237px;top:52px" width="8" height="5" ><use href="#dd"/></svg>
<svg class="i" style="left:255px;top:46px" width="16" height="16" ><use href="#tb_open"/></svg>
<svg class="i" style="left:279px;top:46px" width="16" height="16" ><use href="#tb_pen"/></svg>
<svg class="i" style="left:303px;top:52px" width="8" height="5" ><use href="#dd"/></svg>
<svg class="i" style="left:323px;top:46px" width="16" height="16" ><use href="#tb_next"/></svg>
<svg class="i" style="left:346px;top:52px" width="8" height="5" ><use href="#ddg"/></svg>
<svg class="i" style="left:361px;top:46px" width="16" height="16" ><use href="#tb_prev"/></svg>
<svg class="i" style="left:384px;top:52px" width="8" height="5" ><use href="#ddg"/></svg>
<svg class="i" style="left:398px;top:46px" width="16" height="16" ><use href="#tb_lastedit"/></svg>
<svg class="i" style="left:421px;top:46px" width="16" height="16" ><use href="#tb_nextedit"/></svg>
<svg class="i" style="left:445px;top:46px" width="16" height="16" ><use href="#tb_back"/></svg>
<svg class="i" style="left:468px;top:52px" width="8" height="5" ><use href="#dd"/></svg>
<svg class="i" style="left:483px;top:46px" width="16" height="16" ><use href="#tb_fwd"/></svg>
<svg class="i" style="left:506px;top:52px" width="8" height="5" ><use href="#ddg"/></svg>
<svg class="i" style="left:528px;top:46px" width="16" height="16" ><use href="#tb_pin"/></svg>
<div class="b" style="left:0px;top:47px;width:2px;height:14px;background:repeating-linear-gradient(#a8a8a8 0 2px,transparent 2px 4px)"></div>
<div class="b" style="left:127px;top:47px;width:2px;height:14px;background:repeating-linear-gradient(#a8a8a8 0 2px,transparent 2px 4px)"></div>
<div class="b" style="left:178px;top:47px;width:2px;height:14px;background:repeating-linear-gradient(#a8a8a8 0 2px,transparent 2px 4px)"></div>
<div class="b" style="left:206px;top:47px;width:2px;height:14px;background:repeating-linear-gradient(#a8a8a8 0 2px,transparent 2px 4px)"></div>
<div class="b" style="left:249px;top:47px;width:2px;height:14px;background:repeating-linear-gradient(#a8a8a8 0 2px,transparent 2px 4px)"></div>
<div class="b" style="left:316px;top:47px;width:2px;height:14px;background:repeating-linear-gradient(#a8a8a8 0 2px,transparent 2px 4px)"></div>
<div class="b" style="left:519px;top:45px;width:1px;height:18px;background:#8f8f8f"></div>
<div class="b" style="left:0;top:69px;width:188px;height:941px;background:#f8f8f8"></div>
<div class="b" style="left:188px;top:69px;width:5px;height:941px;background:#fafafa"></div>
<div class="b" style="left:37px;top:69px;width:58px;height:24px;background:#fbfbfb;border-left:1px solid #e6e6e6;border-right:1px solid #e6e6e6"></div>
<div class="b" style="left:38px;top:92px;width:56px;height:2px;background:#8c8c8c"></div>
<div class="b" style="left:0px;top:94px;width:188px;height:1px;background:#efefef"></div>
<svg class="i" style="left:4px;top:74px" width="16" height="16" ><use href="#x_red"/></svg>
<span class="t " style="left:24px;top:74px;letter-spacing:0.328px;color:#333">N</span>
<svg class="i" style="left:42px;top:74px" width="16" height="16" ><use href="#pkgexp"/></svg>
<span class="t " style="left:62px;top:74px;letter-spacing:-1.016px;color:#222">P</span>
<svg class="i" style="left:77px;top:78px" width="9" height="9" ><use href="#x_close"/></svg>
<svg class="i" style="left:98px;top:74px" width="16" height="16" ><use href="#hier"/></svg>
<span class="t " style="left:118px;top:74px;letter-spacing:-1.016px;color:#333">P</span>
<svg class="i" style="left:144px;top:76px" width="10" height="4" ><use href="#minim"/></svg>
<svg class="i" style="left:167px;top:76px" width="10" height="10" ><use href="#maxim"/></svg>
<svg class="i" style="left:68px;top:98px" width="16" height="16" ><use href="#collapse"/></svg>
<svg class="i" style="left:90px;top:98px" width="16" height="16" ><use href="#link"/></svg>
<svg class="i" style="left:113px;top:98px" width="16" height="16" ><use href="#filter"/></svg>
<div class="b" style="left:135px;top:97px;width:1px;height:16px;background:#9a9a9a"></div>
<svg class="i" style="left:145px;top:98px" width="16" height="16" ><use href="#focus"/></svg>
<svg class="i" style="left:171px;top:98px" width="8" height="16" ><use href="#kebab"/></svg>
<div class="b" style="left:0;top:116px;width:188px;height:400px;overflow:hidden">
<svg class="i" style="left:8px;top:5px" width="7" height="10" ><use href="#arr_c"/></svg>
<svg class="i" style="left:19px;top:1px" width="16" height="16" ><use href="#proj"/></svg>
<span class="t " style="left:40px;top:1px;letter-spacing:-0.205px;">bombasCent</span>
<svg class="i" style="left:8px;top:23px" width="7" height="10" ><use href="#arr_c"/></svg>
<svg class="i" style="left:19px;top:19px" width="16" height="16" ><use href="#proj"/></svg>
<span class="t " style="left:40px;top:19px;letter-spacing:0.144px;">indicador</span>
<svg class="i" style="left:8px;top:41px" width="7" height="10" ><use href="#arr_c"/></svg>
<svg class="i" style="left:19px;top:37px" width="16" height="16" ><use href="#proj"/></svg>
<span class="t " style="left:40px;top:37px;letter-spacing:0.328px;">logo</span>
<svg class="i" style="left:8px;top:59px" width="7" height="10" ><use href="#arr_c"/></svg>
<svg class="i" style="left:19px;top:55px" width="16" height="16" ><use href="#proj"/></svg>
<span class="t " style="left:40px;top:55px;letter-spacing:0.092px;">modulos</span>
<svg class="i" style="left:8px;top:77px" width="7" height="10" ><use href="#arr_c"/></svg>
<svg class="i" style="left:19px;top:73px" width="16" height="16" ><use href="#proj"/></svg>
<span class="t " style="left:40px;top:73px;letter-spacing:-0.008px;">nuev</span>
<svg class="i" style="left:8px;top:95px" width="7" height="10" ><use href="#arr_c"/></svg>
<svg class="i" style="left:19px;top:91px" width="16" height="16" ><use href="#proj"/></svg>
<span class="t " style="left:40px;top:91px;letter-spacing:-0.115px;">nuevoHmiPruebas</span>
<svg class="i" style="left:8px;top:113px" width="7" height="10" ><use href="#arr_c"/></svg>
<svg class="i" style="left:19px;top:109px" width="16" height="16" ><use href="#proj"/></svg>
<span class="t " style="left:40px;top:109px;letter-spacing:0.085px;">proyectoInicial</span>
<svg class="i" style="left:8px;top:131px" width="7" height="10" ><use href="#arr_c"/></svg>
<svg class="i" style="left:19px;top:127px" width="16" height="16" ><use href="#proj"/></svg>
<span class="t " style="left:40px;top:127px;letter-spacing:-0.028px;">seccionamiento</span>
<svg class="i" style="left:19px;top:145px" width="16" height="16" ><use href="#projclosed"/></svg>
<span class="t " style="left:40px;top:145px;letter-spacing:-0.071px;">seccionamiento2</span>
<svg class="i" style="left:6px;top:169px" width="10" height="7" ><use href="#arr_o"/></svg>
<svg class="i" style="left:19px;top:163px" width="16" height="16" ><use href="#proj"/></svg>
<span class="t " style="left:40px;top:163px;letter-spacing:0.198px;">voltimetro</span>
<svg class="i" style="left:24px;top:185px" width="7" height="10" ><use href="#arr_c"/></svg>
<svg class="i" style="left:35px;top:181px" width="16" height="16" ><use href="#jre"/></svg>
<span class="t " style="left:56px;top:181px;letter-spacing:-0.545px;">JRE System Library </span>
<span class="t " style="left:155px;top:181px;letter-spacing:-0.559px;color:#957d47">[JavaSE-1.8]</span>
<svg class="i" style="left:22px;top:205px" width="10" height="7" ><use href="#arr_o"/></svg>
<svg class="i" style="left:35px;top:199px" width="16" height="16" ><use href="#srcf"/></svg>
<span class="t " style="left:56px;top:199px;letter-spacing:-0.333px;">src</span>
<svg class="i" style="left:40px;top:221px" width="7" height="10" ><use href="#arr_c"/></svg>
<svg class="i" style="left:51px;top:217px" width="16" height="16" ><use href="#pkgw"/></svg>
<span class="t " style="left:72px;top:217px;letter-spacing:-0.01px;">app</span>
<svg class="i" style="left:40px;top:239px" width="7" height="10" ><use href="#arr_c"/></svg>
<svg class="i" style="left:51px;top:235px" width="16" height="16" ><use href="#pkge"/></svg>
<span class="t " style="left:72px;top:235px;letter-spacing:0.219px;">img</span>
<svg class="i" style="left:40px;top:257px" width="7" height="10" ><use href="#arr_c"/></svg>
<svg class="i" style="left:51px;top:253px" width="16" height="16" ><use href="#pkg"/></svg>
<span class="t " style="left:72px;top:253px;letter-spacing:0.144px;">iniciador</span>
<svg class="i" style="left:38px;top:277px" width="10" height="7" ><use href="#arr_o"/></svg>
<svg class="i" style="left:51px;top:271px" width="16" height="16" ><use href="#pkgw"/></svg>
<span class="t " style="left:72px;top:271px;letter-spacing:-0.292px;">paneles</span>
<div class="b" style="left:65px;top:288px;width:200px;height:18px;background:#d9d9d9"></div>
<svg class="i" style="left:56px;top:293px" width="7" height="10" ><use href="#arr_c"/></svg>
<svg class="i" style="left:67px;top:289px" width="16" height="16" ><use href="#jfilew"/></svg>
<span class="t " style="left:88px;top:289px;letter-spacing:-0.232px;">PanelCompuesto.java</span>
<svg class="i" style="left:56px;top:311px" width="7" height="10" ><use href="#arr_c"/></svg>
<svg class="i" style="left:67px;top:307px" width="16" height="16" ><use href="#jfilew"/></svg>
<span class="t " style="left:88px;top:307px;letter-spacing:-0.114px;">voltSimple.java</span>
<svg class="i" style="left:24px;top:329px" width="7" height="10" ><use href="#arr_c"/></svg>
<svg class="i" style="left:35px;top:325px" width="16" height="16" ><use href="#jre"/></svg>
<span class="t " style="left:56px;top:325px;letter-spacing:-0.27px;">Referenced Libraries</span>
<svg class="i" style="left:24px;top:347px" width="7" height="10" ><use href="#arr_c"/></svg>
<svg class="i" style="left:35px;top:343px" width="16" height="16" ><use href="#folder"/></svg>
<span class="t " style="left:56px;top:343px;letter-spacing:-0.145px;">dependencias</span>
<svg class="i" style="left:24px;top:365px" width="7" height="10" ><use href="#arr_c"/></svg>
<svg class="i" style="left:35px;top:361px" width="16" height="16" ><use href="#folder"/></svg>
<span class="t " style="left:56px;top:361px;letter-spacing:0.214px;">doc</span>
</div>
<svg class="i" style="left:5px;top:996px" width="6" height="9" ><use href="#sc_l"/></svg>
<svg class="i" style="left:175px;top:996px" width="6" height="9" ><use href="#sc_r"/></svg>
<div class="b" style="left:17px;top:994px;width:130px;height:15px;background:#cdcdcd"></div>
<div class="b" style="left:194px;top:69px;width:1174px;height:25px;background:#f8f8f8"></div>
<div class="b" style="left:0;top:68px;width:1368px;height:1px;background:#ececec"></div>
<div class="b" style="left:193px;top:94px;width:1175px;height:1px;background:#e6e6e6"></div>
<div class="b" style="left:631px;top:69px;width:165px;height:26px;background:#fff;border-top:2px solid #2d5fa8"></div>
<svg class="i" style="left:196px;top:75px" width="16" height="16" ><use href="#jtab"/></svg>
<span class="t " style="left:216px;top:74px;letter-spacing:-0.098px;">Principal.java</span>
<svg class="i" style="left:317px;top:74px" width="16" height="16" ><use href="#hmi"/></svg>
<span class="t " style="left:337px;top:74px;letter-spacing:0.333px;">HMI</span>
<svg class="i" style="left:389px;top:75px" width="16" height="16" ><use href="#jtabw"/></svg>
<span class="t " style="left:409px;top:74px;letter-spacing:-0.07px;">*Principal.java</span>
<svg class="i" style="left:514px;top:75px" width="16" height="16" ><use href="#jtabw"/></svg>
<span class="t " style="left:534px;top:74px;letter-spacing:-0.098px;">Principal.java</span>
<svg class="i" style="left:634px;top:75px" width="16" height="16" ><use href="#jtabw"/></svg>
<span class="t " style="left:654px;top:74px;letter-spacing:-0.232px;">PanelCompuesto.java</span>
<svg class="i" style="left:779px;top:77px" width="10" height="10" ><use href="#x_close"/></svg>
<div class="b" style="left:194px;top:95px;width:1174px;height:915px;background:#fff"></div>
<div class="b" style="left:194px;top:989px;width:1174px;height:21px;background:#f8f8f8;border-top:1px solid #a2a2a2"></div>
<div class="b" style="left:0;top:1010px;width:1368px;height:29px;background:#f8f8f8;border-top:1px solid #e6e6e6"></div>
<svg class="i" style="left:200px;top:101px" width="5" height="8" ><use href="#tri_l"/></svg>
<div class="b" style="left:218px;top:103px;width:27px;height:1px;background:#9a9a9a"></div>
<div class="b" style="left:217px;top:108px;width:26px;height:1px;background:#9a9a9a"></div>
<div class="b" style="left:313px;top:103px;width:27px;height:1px;background:#9a9a9a"></div>
<div class="b" style="left:312px;top:108px;width:26px;height:1px;background:#9a9a9a"></div>
<span class="t bold" style="left:250px;top:97px;letter-spacing:0.073px;color:#111">Structure</span>
<div class="b" style="left:195px;top:113px;width:253px;height:435px;border:1px solid #a9a9a9;background:#fff;box-shadow:inset 0 0 0 1px #e2e2e2"></div>
<div class="b" style="left:197px;top:136px;width:250px;height:1px;background:#b5b5b5"></div>
<svg class="i" style="left:201px;top:118px" width="16" height="16" ><use href="#comps"/></svg>
<span class="t " style="left:221px;top:118px;letter-spacing:-0.105px;">Components</span>
<svg class="i" style="left:404px;top:118px" width="16" height="16" ><use href="#expall"/></svg>
<svg class="i" style="left:427px;top:118px" width="16" height="16" ><use href="#colall"/></svg>
<svg class="i" style="left:202px;top:144px" width="10" height="7" ><use href="#arr_o"/></svg>
<svg class="i" style="left:217px;top:140px" width="14" height="14" ><use href="#chk"/></svg>
<div class="b" style="left:237px;top:139px;width:210px;height:16px;overflow:hidden"><span class="t " style="left:0px;top:0px;letter-spacing:0.048px;">(spgn.pgn.gui.cliente.graficos.cmp.cont</span><span class="t " style="left:210px;top:0px;letter-spacing:-0.358px;">enedores.PanelSA)</span></div>
<svg class="i" style="left:233px;top:158px" width="14" height="14" ><use href="#chk"/></svg>
<span class="t " style="left:253px;top:157px;letter-spacing:-0.185px;">voltSimple_</span>
<svg class="i" style="left:233px;top:176px" width="14" height="14" ><use href="#chk"/></svg>
<span class="t " style="left:253px;top:175px;letter-spacing:-0.337px;">voltSimple__1</span>
<svg class="i" style="left:233px;top:194px" width="14" height="14" ><use href="#chk"/></svg>
<span class="t " style="left:253px;top:193px;letter-spacing:0.438px;">bit</span>
<svg class="i" style="left:233px;top:212px" width="16" height="14" ><use href="#rigid"/></svg>
<span class="t " style="left:253px;top:211px;">rigidArea</span>
<div class="b" style="left:447px;top:95px;width:5px;height:893px;background:#fff"></div>
<div class="b" style="left:197px;top:529px;width:250px;height:17px;background:#f0f0f0"></div>
<div class="b" style="left:214px;top:530px;width:153px;height:15px;background:#cdcdcd"></div>
<svg class="i" style="left:202px;top:533px" width="6" height="9" ><use href="#sc_l"/></svg>
<svg class="i" style="left:434px;top:533px" width="6" height="9" ><use href="#sc_r"/></svg>
<div class="b" style="left:195px;top:551px;width:253px;height:436px;border:1px solid #a9a9a9;background:#fff;box-shadow:inset 0 0 0 1px #e2e2e2"></div>
<div class="b" style="left:197px;top:575px;width:250px;height:1px;background:#b5b5b5"></div>
<svg class="i" style="left:201px;top:557px" width="16" height="16" ><use href="#props"/></svg>
<span class="t " style="left:221px;top:557px;letter-spacing:-0.17px;">Properties</span>
<svg class="i" style="left:372px;top:556px" width="16" height="16" ><use href="#pr1"/></svg>
<div class="b" style="left:394px;top:555px;width:1px;height:18px;background:#a0a0a0"></div>
<svg class="i" style="left:403px;top:556px" width="16" height="16" ><use href="#pr2"/></svg>
<svg class="i" style="left:427px;top:556px" width="16" height="16" ><use href="#pr3"/></svg>
<span class="t " style="left:278px;top:773px;color:#8c8c8c;font-size:11.8px">&lt;No Properties&gt;</span>
<div class="b" style="left:452px;top:96px;width:1px;height:891px;background:#a4a4a4"></div>
<div class="b" style="left:453px;top:127px;width:915px;height:1px;background:#b8b8b8"></div>
<svg class="i" style="left:457px;top:104px" width="16" height="16" ><use href="#dt_test"/></svg>
<svg class="i" style="left:488px;top:104px" width="16" height="16" ><use href="#dt_run"/></svg>
<svg class="i" style="left:513px;top:104px" width="16" height="16" ><use href="#dt_refresh"/></svg>
<svg class="i" style="left:545px;top:104px" width="16" height="16" ><use href="#dt_undo"/></svg>
<svg class="i" style="left:569px;top:104px" width="16" height="16" ><use href="#dt_redo"/></svg>
<svg class="i" style="left:601px;top:104px" width="16" height="16" ><use href="#dt_cut"/></svg>
<svg class="i" style="left:625px;top:104px" width="16" height="16" ><use href="#dt_copy"/></svg>
<svg class="i" style="left:650px;top:104px" width="16" height="16" ><use href="#dt_paste"/></svg>
<svg class="i" style="left:674px;top:104px" width="16" height="16" ><use href="#dt_del"/></svg>
<svg class="i" style="left:705px;top:104px" width="16" height="16" ><use href="#dt_layout"/></svg>
<svg class="i" style="left:741px;top:104px" width="16" height="16" ><use href="#dt_globe"/></svg>
<svg class="i" style="left:767px;top:110px" width="8" height="5" ><use href="#dd"/></svg>
<svg class="i" style="left:793px;top:104px" width="16" height="16" ><use href="#dt_sys"/></svg>
<svg class="i" style="left:880px;top:110px" width="8" height="5" ><use href="#dd"/></svg>
<div class="b" style="left:479px;top:99px;width:1px;height:26px;background:#a0a0a0"></div>
<div class="b" style="left:535px;top:99px;width:1px;height:26px;background:#a0a0a0"></div>
<div class="b" style="left:591px;top:99px;width:1px;height:26px;background:#a0a0a0"></div>
<div class="b" style="left:695px;top:99px;width:1px;height:26px;background:#a0a0a0"></div>
<div class="b" style="left:727px;top:99px;width:1px;height:26px;background:#a0a0a0"></div>
<div class="b" style="left:780px;top:99px;width:1px;height:26px;background:#a0a0a0"></div>
<span class="t " style="left:814px;top:104px;font-size:11.5px">&lt;system&gt;</span>
<svg class="i" style="left:458px;top:131px" width="5" height="8" ><use href="#tri_l"/></svg>
<div class="b" style="left:475px;top:134px;width:28px;height:1px;background:#9a9a9a"></div>
<div class="b" style="left:474px;top:139px;width:27px;height:1px;background:#9a9a9a"></div>
<div class="b" style="left:556px;top:134px;width:28px;height:1px;background:#9a9a9a"></div>
<div class="b" style="left:555px;top:139px;width:27px;height:1px;background:#9a9a9a"></div>
<span class="t bold" style="left:508px;top:128px;letter-spacing:0.092px;color:#111">Palette</span>
<div class="b" style="left:453px;top:142px;width:335px;height:845px;background:#f0f0f0;overflow:hidden">
</div>
<div class="b" style="left:0;top:142px;width:788px;height:845px;overflow:hidden"><div style="position:absolute;left:0;top:-142px">
<div class="cat" style="top:132px"><svg class="i" style="left:4px;top:1px" width="16" height="16" ><use href="#fold_c"/></svg><span class="t" style="letter-spacing:-0.309px;">AWT Components</span></div>
<div class="cat" style="top:151px"><svg class="i" style="left:4px;top:1px" width="16" height="16" ><use href="#fold_c"/></svg><span class="t" style="letter-spacing:-0.711px;">JGoodies</span></div>
<div class="cat" style="top:170px"><svg class="i" style="left:4px;top:1px" width="16" height="16" ><use href="#fold_o"/></svg><span class="t" style="letter-spacing:-0.292px;">ContenedoresSpgn</span></div>
<div class="pe" style="top:189px"><svg class="i" style="left:5px;top:4px" width="14" height="14" ><use href="#chk"/></svg><span class="t" style="letter-spacing:-0.411px;">PanelCard</span></div>
<div class="pe" style="top:211px"><svg class="i" style="left:5px;top:4px" width="14" height="14" ><use href="#chk"/></svg><span class="t" style="letter-spacing:-0.529px;">PanelSA</span></div>
<div class="cat" style="top:233px"><svg class="i" style="left:4px;top:1px" width="16" height="16" ><use href="#fold_o"/></svg><span class="t" style="letter-spacing:-0.358px;">ActuadoresSpgn</span></div>
<div class="pe" style="top:252px"><svg class="i" style="left:5px;top:4px" width="14" height="14" ><use href="#chk"/></svg><span class="t" style="letter-spacing:-0.005px;">Bit</span></div>
<div class="pe" style="top:274px"><svg class="i" style="left:5px;top:4px" width="14" height="14" ><use href="#chk"/></svg><span class="t" style="letter-spacing:0.041px;">BitAv</span></div>
<div class="pe" style="top:296px"><svg class="i" style="left:5px;top:4px" width="14" height="14" ><use href="#chk"/></svg><span class="t" style="letter-spacing:0.128px;">Boton</span></div>
<div class="pe" style="top:318px"><svg class="i" style="left:4px;top:4px" width="16" height="14" ><use href="#slider"/></svg><span class="t" style="letter-spacing:-0.27px;">Deslizador</span></div>
<div class="pe" style="top:340px"><svg class="i" style="left:5px;top:4px" width="14" height="14" ><use href="#chk"/></svg><span class="t" style="letter-spacing:0.08px;">Numerico</span></div>
<div class="pe" style="top:362px"><svg class="i" style="left:4px;top:4px" width="16" height="14" ><use href="#tfield"/></svg><span class="t" style="letter-spacing:0.062px;">Texto</span></div>
<div class="pe" style="top:384px"><svg class="i" style="left:4px;top:4px" width="16" height="14" ><use href="#tarea"/></svg><span class="t" style="letter-spacing:-0.186px;">TextoLineas</span></div>
<div class="cat" style="top:406px"><svg class="i" style="left:4px;top:1px" width="16" height="16" ><use href="#fold_o"/></svg><span class="t" style="letter-spacing:-0.357px;">IndicadoresSpgn</span></div>
<div class="pe" style="top:425px"><svg class="i" style="left:5px;top:4px" width="14" height="14" ><use href="#chk"/></svg><span class="t" style="letter-spacing:-0.219px;">ImagenPorRango</span></div>
<div class="pe" style="top:447px"><svg class="i" style="left:5px;top:4px" width="14" height="14" ><use href="#chk"/></svg><span class="t" style="letter-spacing:-0.131px;">ImagenPorValor</span></div>
<div class="pe" style="top:469px"><svg class="i" style="left:4px;top:4px" width="16" height="14" ><use href="#label"/></svg><span class="t" style="letter-spacing:0.078px;">TextoInd</span></div>
<div class="pe" style="top:491px"><svg class="i" style="left:4px;top:4px" width="16" height="14" ><use href="#label"/></svg><span class="t" style="letter-spacing:-0.132px;">TextoPorRango</span></div>
<div class="cat" style="top:513px"><svg class="i" style="left:4px;top:1px" width="16" height="16" ><use href="#fold_o"/></svg><span class="t" style="letter-spacing:-0.548px;">AnalogicosSpgn</span></div>
<div class="pe" style="top:532px"><svg class="i" style="left:5px;top:4px" width="14" height="14" ><use href="#chk"/></svg><span class="t" style="letter-spacing:0.078px;">AgujaInd</span></div>
<div class="pe" style="top:554px"><svg class="i" style="left:5px;top:4px" width="14" height="14" ><use href="#chk"/></svg><span class="t" style="letter-spacing:-0.337px;">BarrasInd</span></div>
<div class="cat" style="top:576px"><svg class="i" style="left:4px;top:1px" width="16" height="16" ><use href="#fold_o"/></svg><span class="t" style="letter-spacing:-0.474px;">GraficosSpgn</span></div>
<div class="pe" style="top:595px"><svg class="i" style="left:5px;top:4px" width="14" height="14" ><use href="#chk"/></svg><span class="t" style="letter-spacing:-0.181px;">GraficoSimple</span></div>
<div class="cat" style="top:617px"><svg class="i" style="left:4px;top:1px" width="16" height="16" ><use href="#fold_o"/></svg><span class="t" style="letter-spacing:-0.613px;">TablasSpgn</span></div>
<div class="pe" style="top:636px"><svg class="i" style="left:5px;top:4px" width="14" height="14" ><use href="#chk"/></svg><span class="t" style="letter-spacing:-0.199px;">TablaAlarmaSimple</span></div>
<div class="pe" style="top:658px"><svg class="i" style="left:5px;top:4px" width="14" height="14" ><use href="#chk"/></svg><span class="t" style="letter-spacing:-0.339px;">TablaVSql</span></div>
<div class="cat" style="top:680px"><svg class="i" style="left:4px;top:1px" width="16" height="16" ><use href="#fold_o"/></svg><span class="t" style="letter-spacing:-0.427px;">TuberiasSpgn</span></div>
<div class="pe" style="top:699px"><svg class="i" style="left:5px;top:4px" width="14" height="14" ><use href="#chk"/></svg><span class="t" style="letter-spacing:-0.172px;">Codo</span></div>
<div class="pe" style="top:721px"><svg class="i" style="left:5px;top:4px" width="14" height="14" ><use href="#chk"/></svg><span class="t" style="letter-spacing:-0.179px;">Tuberia</span></div>
<div class="pe" style="top:743px"><svg class="i" style="left:5px;top:4px" width="14" height="14" ><use href="#chk"/></svg><span class="t" style="letter-spacing:-0.406px;">CodoT</span></div>
<div class="cat" style="top:765px"><svg class="i" style="left:4px;top:1px" width="16" height="16" ><use href="#fold_o"/></svg><span class="t" style="letter-spacing:-0.76px;">PasivosSpgn</span></div>
<div class="pe" style="top:784px"><svg class="i" style="left:4px;top:4px" width="16" height="14" ><use href="#label"/></svg><span class="t" style="letter-spacing:-0.131px;">Etiqueta</span></div>
<div class="pe" style="top:806px"><svg class="i" style="left:5px;top:4px" width="14" height="14" ><use href="#chk"/></svg><span class="t" style="letter-spacing:-0.172px;">Imagen</span></div>
<div class="pe" style="top:828px"><svg class="i" style="left:5px;top:4px" width="14" height="14" ><use href="#chk"/></svg><span class="t" style="letter-spacing:-0.243px;">Imagen2</span></div>
<div class="cat" style="top:850px"><svg class="i" style="left:4px;top:1px" width="16" height="16" ><use href="#fold_o"/></svg><span class="t" style="letter-spacing:-0.333px;">ComponentesSpgn</span></div>
<div class="pe" style="top:869px"><svg class="i" style="left:4px;top:4px" width="16" height="14" ><use href="#label"/></svg><span class="t" style="letter-spacing:-0.191px;">CronoTimer</span></div>
<div class="pe" style="top:891px"><svg class="i" style="left:5px;top:4px" width="14" height="14" ><use href="#chk"/></svg><span class="t" style="letter-spacing:-0.249px;">PanelCalendario</span></div>
<div class="pe" style="top:913px"><svg class="i" style="left:5px;top:4px" width="14" height="14" ><use href="#chk"/></svg><span class="t" style="letter-spacing:-0.18px;">PanelCalendarioHoja</span></div>
<div class="pe" style="top:935px"><svg class="i" style="left:5px;top:4px" width="14" height="14" ><use href="#chk"/></svg><span class="t" style="letter-spacing:-0.314px;">PanelEmergente</span></div>
<div class="cat" style="top:957px"><svg class="i" style="left:4px;top:1px" width="16" height="16" ><use href="#fold_o"/></svg><span class="t" style="letter-spacing:-0.464px;">ElectricosCmp</span></div>
<div class="cat" style="top:976px"><svg class="i" style="left:4px;top:1px" width="16" height="16" ><use href="#fold_o"/></svg><span class="t" style="letter-spacing:-0.529px;">locales</span></div>
</div></div>
<div class="b" style="left:769px;top:142px;width:1px;height:845px;background:#fff"></div>
<div class="b" style="left:770px;top:143px;width:16px;height:844px;background:#f0f0f0"></div>
<div class="b" style="left:770px;top:278px;width:15px;height:700px;background:#cdcdcd"></div>
<svg class="i" style="left:774px;top:149px" width="8" height="6" ><use href="#sc_u"/></svg>
<div class="b" style="left:770px;top:980px;width:16px;height:7px;overflow:hidden"><svg class="i" style="left:4px;top:4px" width="8" height="6" ><use href="#sc_d"/></svg></div>
<div class="b" style="left:786px;top:128px;width:582px;height:861px;background:#fff"></div>
<div class="b" style="left:790px;top:128px;width:1px;height:859px;background:#8f8f8f"></div>
<div class="b" style="left:791px;top:144px;width:15px;height:843px;background:#f0f0f0"></div>
<div class="b" style="left:806px;top:128px;width:562px;height:15px;background:#f0f0f0"></div>
<div class="b" style="left:806px;top:143px;width:562px;height:844px;background:#fff;border-left:1px solid #8f8f8f;border-top:1px solid #8f8f8f"></div>
<div class="b" style="left:194px;top:987px;width:1174px;height:2px;background:#fff"></div>
<div class="b" style="left:827px;top:164px;width:525px;height:333px;background:#0f2a4f"></div>
<div class="b" style="left:827px;top:164px;width:523px;height:331px;background:#6fb5f0"></div>
<div class="b" style="left:827px;top:164px;width:521px;height:329px;background:#5aa5e0"></div>
<div class="b" style="left:828px;top:165px;width:520px;height:328px;background:#3a7fc0"></div>
<div class="b" style="left:829px;top:166px;width:519px;height:327px;background:#17406f"></div>
<div class="b" style="left:831px;top:168px;width:517px;height:325px;background:#34679a"></div>
<svg class="i" style="left:837px;top:174px" width="247" height="223" viewBox="0 0 247 223" font-family="Liberation Sans, sans-serif"><rect x="0" y="0" width="247" height="223" fill="#000"/><rect x="0.5" y="0.5" width="246" height="222" fill="none" stroke="#9c9c9c" stroke-width="1" stroke-dasharray="2 2"/><rect x="10" y="10" width="227" height="203" fill="#fff"/><clipPath id="gcV"><rect x="10" y="10" width="227" height="203"/></clipPath><g clip-path="url(#gcV)"><path d="M52.0 198.0 A170.0 170.0 0 0 1 222.0 28.0" fill="none" stroke="#000" stroke-width="1.1"/><path d="M52.0 198.0 L71.0 198.0" stroke="#000" stroke-width="2.3"/><text x="72.8" y="210.3" font-size="10" fill="#000">0</text><path d="M52.5 184.7 L62.0 185.4" stroke="#000" stroke-width="1"/><path d="M54.1 171.4 L72.9 174.4" stroke="#000" stroke-width="2.3"/><text x="74.7" y="186.4" font-size="10" fill="#000">40</text><path d="M56.7 158.3 L65.9 160.5" stroke="#000" stroke-width="1"/><path d="M60.3 145.5 L78.4 151.3" stroke="#000" stroke-width="2.3"/><text x="80.3" y="163.1" font-size="10" fill="#000">80</text><path d="M64.9 132.9 L73.7 136.6" stroke="#000" stroke-width="1"/><path d="M70.5 120.8 L87.5 129.4" stroke="#000" stroke-width="2.3"/><text x="89.4" y="141.0" font-size="10" fill="#000">120</text><path d="M77.1 109.2 L85.2 114.1" stroke="#000" stroke-width="1"/><path d="M84.5 98.1 L99.8 109.2" stroke="#000" stroke-width="2.3"/><text x="102.0" y="120.5" font-size="10" fill="#000">160</text><path d="M92.7 87.6 L100.0 93.8" stroke="#000" stroke-width="1"/><path d="M101.8 77.8 L115.2 91.2" stroke="#000" stroke-width="2.3"/><text x="117.5" y="102.3" font-size="10" fill="#000">200</text><path d="M111.6 68.7 L117.8 76.0" stroke="#000" stroke-width="1"/><path d="M122.1 60.5 L133.2 75.8" stroke="#000" stroke-width="2.3"/><text x="135.7" y="86.8" font-size="10" fill="#000">240</text><path d="M133.2 53.1 L138.1 61.2" stroke="#000" stroke-width="1"/><path d="M144.8 46.5 L153.4 63.5" stroke="#000" stroke-width="2.3"/><text x="156.2" y="74.2" font-size="10" fill="#000">280</text><path d="M156.9 40.9 L160.6 49.7" stroke="#000" stroke-width="1"/><path d="M169.5 36.3 L175.3 54.4" stroke="#000" stroke-width="2.3"/><text x="178.3" y="65.1" font-size="10" fill="#000">320</text><path d="M182.3 32.7 L184.5 41.9" stroke="#000" stroke-width="1"/><path d="M195.4 30.1 L198.4 48.9" stroke="#000" stroke-width="2.3"/><text x="201.6" y="59.5" font-size="10" fill="#000">360</text><path d="M208.7 28.5 L209.4 38.0" stroke="#000" stroke-width="1"/><path d="M222.0 28.0 L222.0 47.0" stroke="#000" stroke-width="2.3"/><text x="225.5" y="57.6" font-size="10" fill="#000">400</text><path d="M224.5 201.5 L222.5 27" stroke="#000" stroke-width="5.4"/><circle cx="224.5" cy="201.5" r="24" fill="#000"/></g><text x="65.5" y="42.8" font-size="27.4" text-anchor="middle" fill="#111">V</text></svg>
<svg class="i" style="left:1094px;top:174px" width="247" height="223" viewBox="0 0 247 223" font-family="Liberation Sans, sans-serif"><rect x="0" y="0" width="247" height="223" fill="#000"/><rect x="0.5" y="0.5" width="246" height="222" fill="none" stroke="#9c9c9c" stroke-width="1" stroke-dasharray="2 2"/><rect x="10" y="10" width="227" height="203" fill="#fff"/><clipPath id="gcA"><rect x="10" y="10" width="227" height="203"/></clipPath><g clip-path="url(#gcA)"><path d="M52.0 198.0 A170.0 170.0 0 0 1 222.0 28.0" fill="none" stroke="#000" stroke-width="1.1"/><path d="M52.0 198.0 L71.0 198.0" stroke="#000" stroke-width="2.3"/><text x="72.8" y="210.3" font-size="10" fill="#000">0</text><path d="M52.5 184.7 L62.0 185.4" stroke="#000" stroke-width="1"/><path d="M54.1 171.4 L72.9 174.4" stroke="#000" stroke-width="2.3"/><text x="74.7" y="186.4" font-size="10" fill="#000">2</text><path d="M56.7 158.3 L65.9 160.5" stroke="#000" stroke-width="1"/><path d="M60.3 145.5 L78.4 151.3" stroke="#000" stroke-width="2.3"/><text x="80.3" y="163.1" font-size="10" fill="#000">5</text><path d="M64.9 132.9 L73.7 136.6" stroke="#000" stroke-width="1"/><path d="M70.5 120.8 L87.5 129.4" stroke="#000" stroke-width="2.3"/><text x="89.4" y="141.0" font-size="10" fill="#000">8</text><path d="M77.1 109.2 L85.2 114.1" stroke="#000" stroke-width="1"/><path d="M84.5 98.1 L99.8 109.2" stroke="#000" stroke-width="2.3"/><text x="102.0" y="120.5" font-size="10" fill="#000">10</text><path d="M92.7 87.6 L100.0 93.8" stroke="#000" stroke-width="1"/><path d="M101.8 77.8 L115.2 91.2" stroke="#000" stroke-width="2.3"/><text x="117.5" y="102.3" font-size="10" fill="#000">12</text><path d="M111.6 68.7 L117.8 76.0" stroke="#000" stroke-width="1"/><path d="M122.1 60.5 L133.2 75.8" stroke="#000" stroke-width="2.3"/><text x="135.7" y="86.8" font-size="10" fill="#000">15</text><path d="M133.2 53.1 L138.1 61.2" stroke="#000" stroke-width="1"/><path d="M144.8 46.5 L153.4 63.5" stroke="#000" stroke-width="2.3"/><text x="156.2" y="74.2" font-size="10" fill="#000">18</text><path d="M156.9 40.9 L160.6 49.7" stroke="#000" stroke-width="1"/><path d="M169.5 36.3 L175.3 54.4" stroke="#000" stroke-width="2.3"/><text x="178.3" y="65.1" font-size="10" fill="#000">20</text><path d="M182.3 32.7 L184.5 41.9" stroke="#000" stroke-width="1"/><path d="M195.4 30.1 L198.4 48.9" stroke="#000" stroke-width="2.3"/><text x="201.6" y="59.5" font-size="10" fill="#000">22</text><path d="M208.7 28.5 L209.4 38.0" stroke="#000" stroke-width="1"/><path d="M222.0 28.0 L222.0 47.0" stroke="#000" stroke-width="2.3"/><text x="225.5" y="57.6" font-size="10" fill="#000">25</text><path d="M224.5 201.5 L222.5 27" stroke="#000" stroke-width="5.4"/><circle cx="224.5" cy="201.5" r="24" fill="#000"/></g><text x="65.5" y="42.8" font-size="27.4" text-anchor="middle" fill="#111">A</text></svg>
<svg class="i" style="left:862px;top:430px" width="66" height="54" viewBox="0 0 66 54"><circle cx="26" cy="25.7" r="21" fill="#b9bcc0"/><circle cx="26" cy="25.7" r="19.6" fill="#d4d6d9"/><circle cx="26" cy="25.7" r="18" fill="#121212"/><path d="M8.8 19.6 L11.6 14.4 L60.4 38.0 L54.8 48.2Z" fill="#141414"/><path d="M11.2 17.0 L31.6 27.4" stroke="#f6f6f6" stroke-width="3" stroke-linecap="round"/></svg>
<div class="b" style="left:1088px;top:166px;width:3px;height:329px;background:rgba(45,112,205,.42)"></div>
<div class="b" style="left:1091px;top:168px;width:2px;height:325px;background:rgba(45,112,205,.2)"></div>
<div class="b" style="left:827px;top:329px;width:525px;height:3px;border-top:1px solid #2f6fb5;border-bottom:1px solid #2f6fb5;background:rgba(255,255,255,.8)"></div>
<div class="b" style="left:827px;top:327px;width:3px;height:7px;background:#2a5a9a"></div>
<div class="b" style="left:1083px;top:164px;width:13px;height:2px;background:#2a5a9a"></div>
<div class="b" style="left:194px;top:990px;width:64px;height:19px;background:#fbfbfb"></div>
<svg class="i" style="left:197px;top:991px" width="16" height="16" ><use href="#src_ic"/></svg>
<span class="t " style="left:217px;top:991px;letter-spacing:-0.339px;">Source</span>
<div class="b" style="left:258px;top:989px;width:63px;height:20px;background:#fff;border:1px solid #c8c8c8;border-top:none;border-bottom:2px solid #3a78c0"></div>
<svg class="i" style="left:261px;top:990px" width="16" height="16" ><use href="#des_ic"/></svg>
<span class="t " style="left:281px;top:991px;letter-spacing:-0.227px;">Design</span>
<div class="b" style="left:931px;top:1011px;width:1px;height:22px;background:#b4b4b4"></div>
<div class="b" style="left:1066px;top:1011px;width:1px;height:22px;background:#b4b4b4"></div>
<div class="b" style="left:1194px;top:1011px;width:1px;height:22px;background:#b4b4b4"></div>
<span class="t " style="left:940px;top:1014px;letter-spacing:0.025px;">Writable</span>
<span class="t " style="left:1074px;top:1014px;letter-spacing:-0.28px;">Smart Insert</span>
<span class="t " style="left:1202px;top:1014px;font-size:11px">19 : 34 : 692</span>
<div class="b" style="left:1320px;top:1017px;width:2px;height:14px;background:repeating-linear-gradient(#a8a8a8 0 2px,transparent 2px 4px)"></div>
<div class="b" style="left:1324px;top:1013px;width:44px;height:21px;background:#a0a0a0"></div>
<span class="t " style="left:1353px;top:1015px;letter-spacing:-0.677px;color:#222">255</span>
<div class="b" style="left:0;top:1037px;width:1368px;height:2px;background:#000"></div>
<div class="b" style="left:47px;top:1037px;width:288px;height:2px;background:#d8d8d8"></div>
</body></html>
